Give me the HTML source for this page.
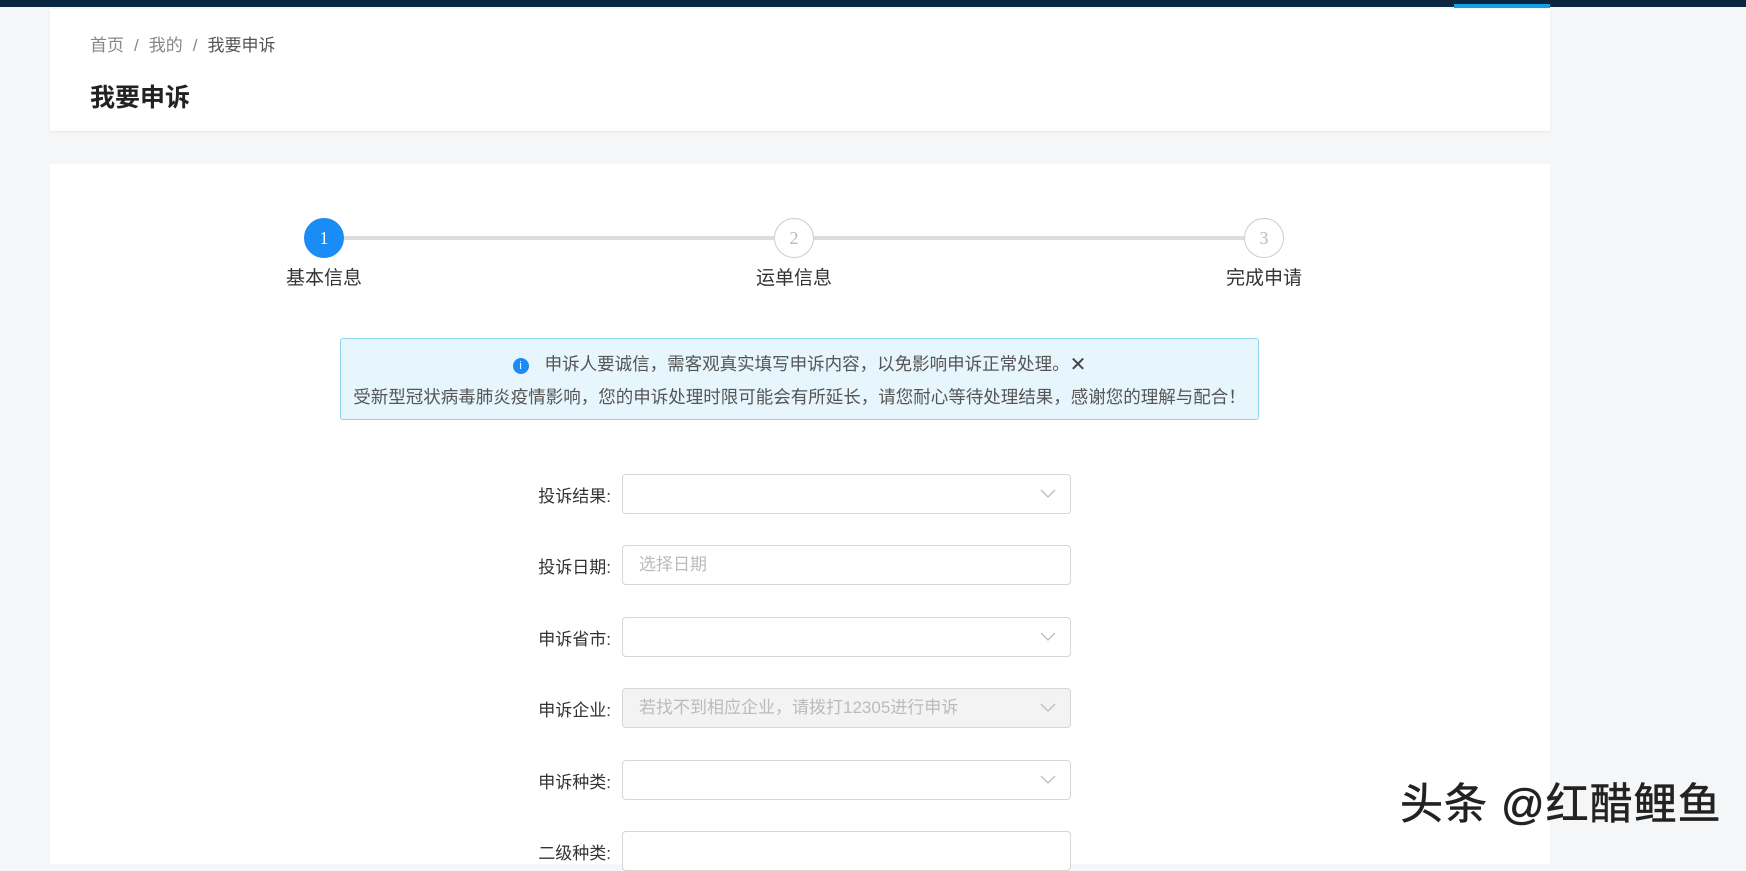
<!DOCTYPE html>
<html><head><meta charset="utf-8"><style>
*{margin:0;padding:0;box-sizing:border-box}
body{width:1746px;height:846px;overflow:hidden;background:#f5f6f7;font-family:"Liberation Sans","Noto Sans CJK SC",sans-serif;position:relative;color:#333}
.top{position:absolute;left:0;top:0;width:1746px;height:7px;background:#0b2440}
.topb{position:absolute;left:1454px;top:4px;width:96px;height:4px;background:#11a0e8}
.card{position:absolute;background:#fff;left:50px;width:1500px}
.bc{position:absolute;left:90px;top:31px;font-size:17px;color:#888}
.bc span{margin:0 10px}
.bc b{font-weight:normal;color:#555}
.title{position:absolute;left:90px;top:78px;font-size:25px;font-weight:bold;color:#222}
.line{position:absolute;top:236px;height:4px;background:#dcdcdc}
.circ{position:absolute;top:218px;width:40px;height:40px;border-radius:50%;border:1px solid #ccc;background:#fff;color:#bbb;font-family:"Liberation Serif",serif;font-size:18px;text-align:center;line-height:38px}
.circ.a{background:#1a8cf5;border-color:#1a8cf5;color:#fff}
.lab{position:absolute;top:263px;width:120px;text-align:center;font-size:19px;color:#333}
.alert{position:absolute;left:340px;top:338px;width:919px;height:82px;background:#e6f6fc;border:1px solid #90d5ef;border-radius:3px;text-align:center;font-size:17.5px;color:#555}
.alert .l1{position:absolute;top:12px;left:0;right:0}
.alert .l2{position:absolute;top:45px;left:0;right:0}
.ic{display:inline-block;width:16px;height:16px;border-radius:50%;background:#1a8cf5;color:#fff;font-size:11px;line-height:16px;vertical-align:1px;margin-right:16px}
.fl{position:absolute;width:200px;text-align:right;left:411px;font-size:17px;color:#333}
.in{position:absolute;left:622px;width:449px;height:40px;border:1px solid #d6d6d6;border-radius:4px;background:#fff;font-size:17px;color:#bbb;padding-left:16px;line-height:38px}
.in.d{background:#f3f3f3}
.in svg{position:absolute;right:14px;top:14px}
.wm{position:absolute;left:1400px;top:770px;font-size:43px;color:#222;letter-spacing:1px;-webkit-text-stroke:0.6px #222}
</style></head><body>
<div class="top"></div><div class="topb"></div>
<div class="card" style="top:9px;height:122px;box-shadow:0 1px 2px #e6e6e6"></div>
<div class="bc">首页<span>/</span>我的<span>/</span><b>我要申诉</b></div>
<div class="title">我要申诉</div>
<div class="card" style="top:164px;height:700px"></div>
<div class="line" style="left:344px;width:430px"></div>
<div class="line" style="left:814px;width:430px"></div>
<div class="circ a" style="left:304px">1</div>
<div class="circ" style="left:774px">2</div>
<div class="circ" style="left:1244px">3</div>
<div class="lab" style="left:264px">基本信息</div>
<div class="lab" style="left:734px">运单信息</div>
<div class="lab" style="left:1204px">完成申请</div>
<div class="alert"><div class="l1"><span class="ic">i</span>申诉人要诚信，需客观真实填写申诉内容，以免影响申诉正常处理。<span style="font-size:20px;color:#444;vertical-align:-1px">✕</span></div>
<div class="l2">受新型冠状病毒肺炎疫情影响，您的申诉处理时限可能会有所延长，请您耐心等待处理结果，感谢您的理解与配合！</div></div>

<div class="fl" style="top:482px">投诉结果:</div>
<div class="in" style="top:474px"><svg width="16" height="10"><path d="M1 1L8 8L15 1" fill="none" stroke="#bbb" stroke-width="1.3"/></svg></div>
<div class="fl" style="top:553px">投诉日期:</div>
<div class="in" style="top:545px">选择日期</div>
<div class="fl" style="top:625px">申诉省市:</div>
<div class="in" style="top:617px"><svg width="16" height="10"><path d="M1 1L8 8L15 1" fill="none" stroke="#bbb" stroke-width="1.3"/></svg></div>
<div class="fl" style="top:696px">申诉企业:</div>
<div class="in d" style="top:688px">若找不到相应企业，请拨打12305进行申诉<svg width="16" height="10"><path d="M1 1L8 8L15 1" fill="none" stroke="#bbb" stroke-width="1.3"/></svg></div>
<div class="fl" style="top:768px">申诉种类:</div>
<div class="in" style="top:760px"><svg width="16" height="10"><path d="M1 1L8 8L15 1" fill="none" stroke="#bbb" stroke-width="1.3"/></svg></div>
<div class="fl" style="top:839px">二级种类:</div>
<div class="in" style="top:831px"></div>
<div class="wm">头条 @红醋鲤鱼</div>
</body></html>
